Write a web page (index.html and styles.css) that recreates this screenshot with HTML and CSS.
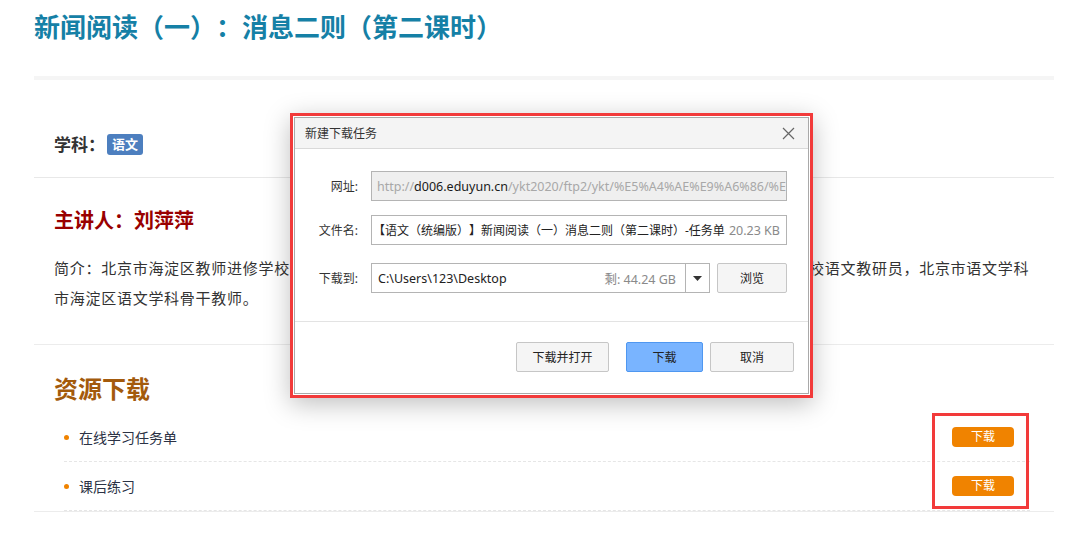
FILE: index.html
```html
<!DOCTYPE html>
<html>
<head>
    <meta charset="utf-8">
    <title>新闻阅读（一）：消息二则（第二课时）</title>
    <link rel="stylesheet" href="styles.css">
</head>
<body>
    <div class="page">
        <h1 class="title">新闻阅读（一）：消息二则（第二课时）</h1>
        <div class="title-bar"></div>

        <div class="subject">
            <span class="subject-label">学科：</span>
            <span class="badge">语文</span>
        </div>

        <div class="teacher">
            <h3 class="teacher-name">主讲人：刘萍萍</h3>
            <p class="intro">简介：北京市海淀区教师进修学校附属实验学校中学高级教师，北京市骨干教师，原北京市海淀区教师进修学校语文教研员，北京市语文学科市海淀区语文学科骨干教师。</p>
        </div>

        <div class="resources">
            <h2 class="res-title">资源下载</h2>
            <ul class="res-list">
                <li><span class="dot"></span><span class="res-name">在线学习任务单</span><a class="dl-btn">下载</a></li>
                <li><span class="dot"></span><span class="res-name">课后练习</span><a class="dl-btn">下载</a></li>
            </ul>
        </div>
    </div>

    <div class="mark-buttons"></div>

    <div class="dialog-mark">
        <div class="dialog">
            <div class="dialog-head">
                <span>新建下载任务</span>
                <svg class="close" width="13" height="13" viewBox="0 0 13 13">
                    <path d="M1 1 L12 12 M12 1 L1 12" stroke="#666" stroke-width="1.2" fill="none"/>
                </svg>
            </div>
            <div class="dialog-body">
                <div class="row">
                    <label>网址:</label>
                    <div class="field field-url"><span class="muted">http://</span>d006.eduyun.cn<span class="muted">/ykt2020/ftp2/ykt/%E5%A4%AE%E9%A6%86/%E</span></div>
                </div>
                <div class="row row-name">
                    <label>文件名:</label>
                    <div class="field field-name"><span class="fname">【语文（统编版）】新闻阅读（一）消息二则（第二课时）-任务单</span><span class="size">20.23 KB</span></div>
                </div>
                <div class="row row-path">
                    <label>下载到:</label>
                    <div class="field field-path">
                        <span class="path">C:\Users\123\Desktop</span>
                        <span class="free">剩: 44.24 GB</span>
                        <span class="drop"><svg width="9" height="5" viewBox="0 0 9 5"><path d="M0 0 L9 0 L4.5 5 Z" fill="#333"/></svg></span>
                    </div>
                    <button class="btn btn-browse">浏览</button>
                </div>
            </div>
            <div class="dialog-foot">
                <button class="btn btn-open">下载并打开</button>
                <button class="btn btn-primary">下载</button>
                <button class="btn btn-cancel">取消</button>
            </div>
        </div>
    </div>
</body>
</html>
```

FILE: styles.css
```css
body {
    margin: 0;
    background: #fff;
    font-family: "Noto Sans", "Noto Sans CJK SC", sans-serif;
    color: #333;
    text-spacing-trim: space-all;
}
.page {
    width: 1020px;
    margin-left: 34px;
}
.title {
    margin: 0;
    padding-top: 11px;
    height: 76px;
    box-sizing: border-box;
    font-size: 26px;
    line-height: 32px;
    color: #1580a6;
    font-weight: bold;
}
.title-bar {
    height: 4px;
    background: #f5f5f5;
}
.subject {
    display: flex;
    align-items: flex-start;
    padding: 54px 20px 0;
    height: 43px;
    border-bottom: 1px solid #e8e8e8;
}
.subject-label {
    font-size: 17px;
    line-height: 21px;
    font-weight: bold;
    color: #333;
}
.badge {
    margin-left: 2px;
    background: #4d7fbf;
    color: #fff;
    font-size: 13px;
    font-weight: bold;
    line-height: 21px;
    padding: 0 5px;
    border-radius: 3px;
}
.teacher {
    padding: 29px 20px 31px;
    border-bottom: 1px solid #ececec;
}
.teacher-name {
    margin: 0 0 18px;
    font-size: 20px;
    line-height: 28px;
    color: #990000;
}
.intro {
    margin: 0;
    font-size: 15px;
    line-height: 30px;
    letter-spacing: 0.73px;
    color: #333;
}
.resources {
    padding-top: 29px;
    border-bottom: 1px solid #ececec;
}
.res-title {
    margin: 0 0 9px 20px;
    font-size: 24px;
    line-height: 30px;
    color: #a35a0c;
}
.res-list {
    list-style: none;
    margin: 0 24px 0 30px;
    padding: 0;
}
.res-list li {
    display: flex;
    align-items: center;
    height: 48px;
    border-bottom: 1px dashed #e6e6e6;
    padding-right: 16px;
}
.dot {
    width: 5px;
    height: 5px;
    border-radius: 50%;
    background: #f08300;
    margin-right: 10px;
}
.res-name {
    flex: 1;
    font-size: 14px;
    color: #2b3245;
}
.dl-btn {
    width: 62px;
    height: 20px;
    line-height: 20px;
    text-align: center;
    background: #f08300;
    color: #fff;
    font-size: 12px;
    border-radius: 4px;
}
.mark-buttons {
    position: absolute;
    left: 932px;
    top: 413px;
    width: 91px;
    height: 90px;
    border: 3px solid #f23a3a;
}

/* dialog */
.dialog-mark {
    position: absolute;
    left: 290px;
    top: 113px;
    border: 3px solid #f23a3a;
    padding: 1px;
    background: #fff;
    box-shadow: 0 6px 24px rgba(0, 0, 0, 0.25);
}
.dialog {
    width: 513px;
    height: 275px;
    border: 1px solid #a9a9a9;
    display: flex;
    flex-direction: column;
    font-size: 12px;
}
.dialog-head {
    display: flex;
    align-items: center;
    justify-content: space-between;
    height: 30px;
    padding: 0 13px 0 10px;
    background: #f4f4f4;
    border-bottom: 1px solid #d9d9d9;
    color: #333;
}
.dialog-body {
    flex: 1;
    padding-top: 22px;
    border-bottom: 1px solid #e3e3e3;
}
.row {
    display: flex;
    align-items: center;
    height: 30px;
}
.row-name {
    margin-top: 14px;
}
.row-path {
    margin-top: 18px;
}
.row label {
    width: 63px;
    text-align: right;
    margin-right: 13px;
    color: #333;
}
.field {
    box-sizing: border-box;
    height: 30px;
    border: 1px solid #b4b4b4;
    display: flex;
    align-items: center;
    padding: 0 6px;
    white-space: nowrap;
    overflow: hidden;
    font-size: 12.5px;
}
.field-url {
    width: 416px;
    background: #efefef;
    color: #1a1a1a;
    padding-left: 5px;
}
.muted {
    color: #a8a8a8;
}
.field-name {
    width: 416px;
    justify-content: space-between;
    color: #222;
    padding-left: 1px;
    font-size: 12px;
}
.size {
    color: #8a8a8a;
    font-size: 12.5px;
}
.field-path {
    width: 339px;
    padding: 0 0 0 6px;
    color: #222;
}
.path {
    flex: 1;
}
.free {
    color: #8a8a8a;
    margin-right: 9px;
}
.drop {
    width: 23px;
    height: 28px;
    border-left: 1px solid #b4b4b4;
    display: flex;
    align-items: center;
    justify-content: center;
}
.btn {
    box-sizing: border-box;
    height: 30px;
    border: 1px solid #c6c6c6;
    border-radius: 2px;
    background: #f5f5f5;
    font-family: "Noto Sans", "Noto Sans CJK SC", sans-serif;
    font-size: 12px;
    color: #222;
    padding: 0;
}
.btn-browse {
    width: 70px;
    margin-left: 7px;
}
.dialog-foot {
    display: flex;
    justify-content: flex-end;
    align-items: flex-start;
    height: 71px;
    box-sizing: border-box;
    padding: 20px 14px 0 0;
}
.btn-open {
    width: 93px;
}
.btn-primary {
    width: 77px;
    margin-left: 17px;
    background: #79b4ff;
    border-color: #4f97f0;
}
.btn-cancel {
    width: 84px;
    margin-left: 7px;
}
```
